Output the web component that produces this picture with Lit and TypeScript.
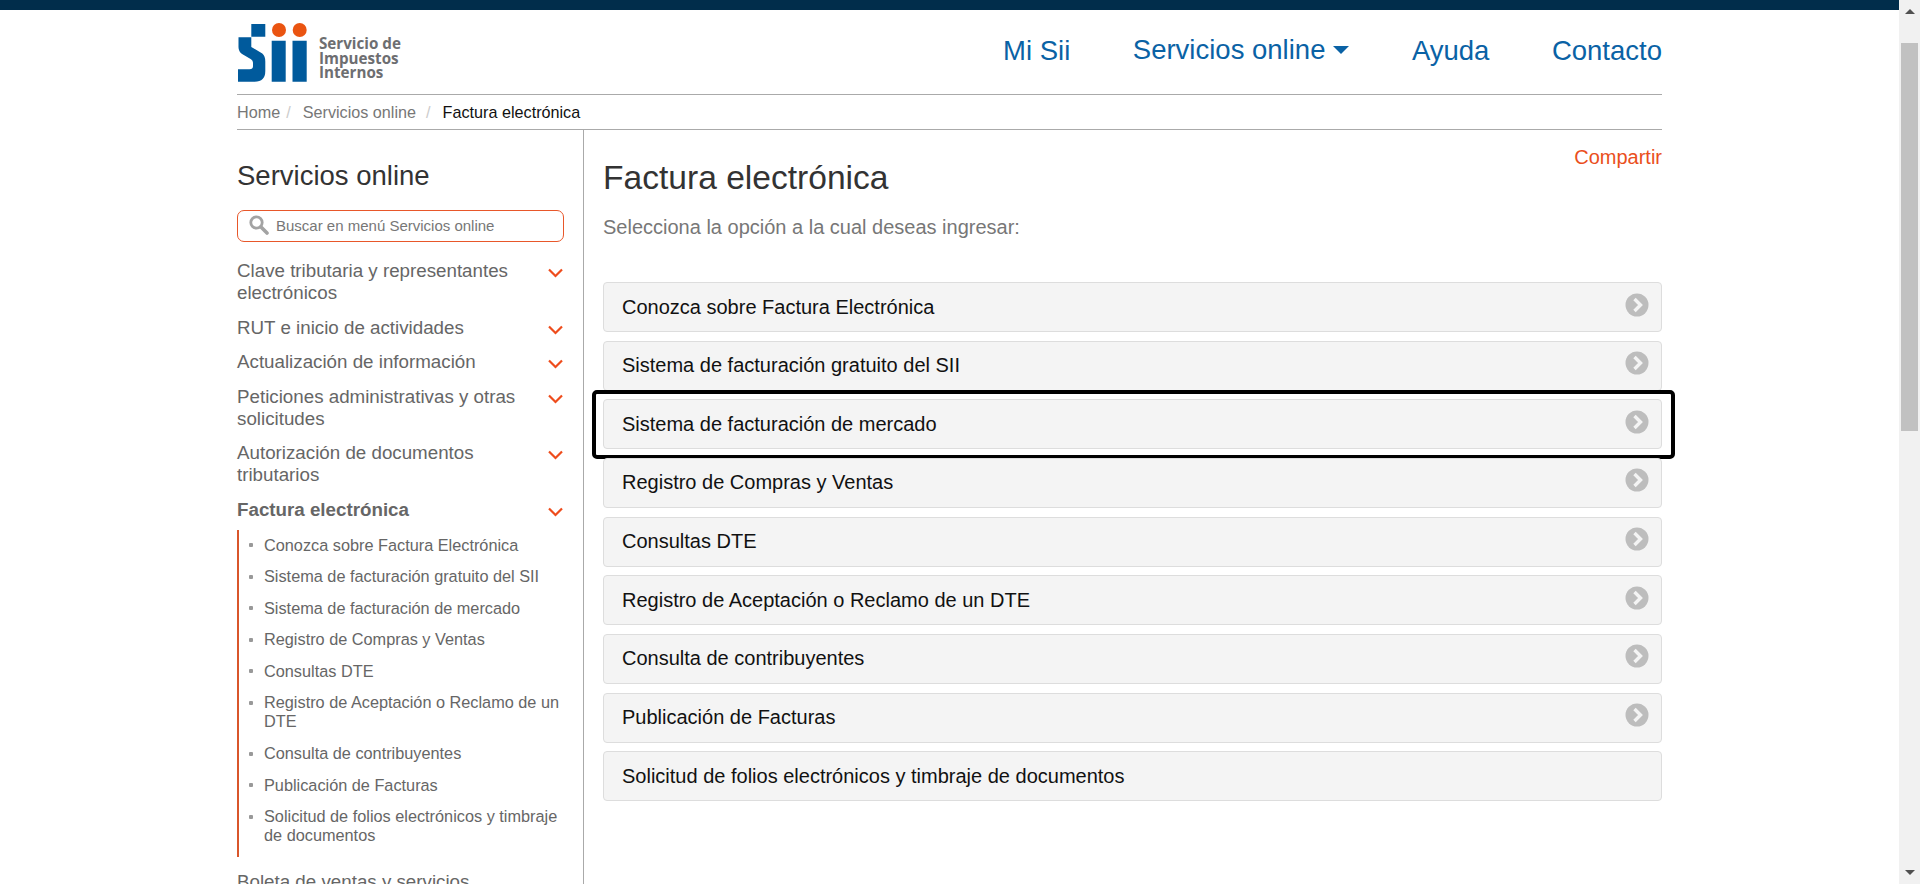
import { LitElement, html, css, svg } from "lit";
import { customElement } from "lit/decorators.js";

const groups: [string, boolean][] = [
  ["Clave tributaria y representantes electrónicos", false],
  ["RUT e inicio de actividades", false],
  ["Actualización de información", false],
  ["Peticiones administrativas y otras solicitudes", false],
  ["Autorización de documentos tributarios", false],
  ["Factura electrónica", true],
];
const subs = [
  "Conozca sobre Factura Electrónica",
  "Sistema de facturación gratuito del SII",
  "Sistema de facturación de mercado",
  "Registro de Compras y Ventas",
  "Consultas DTE",
  "Registro de Aceptación o Reclamo de un DTE",
  "Consulta de contribuyentes",
  "Publicación de Facturas",
  "Solicitud de folios electrónicos y timbraje de documentos",
];

const chevronDown = svg`<svg class="chev" width="15" height="10" viewBox="0 0 15 10"><path d="M1 1.5 L7.5 8 L14 1.5" fill="none" stroke="#ee4c1c" stroke-width="2.2"/></svg>`;
const arrowCircle = svg`<svg class="arrow" width="24" height="24" viewBox="0 0 24 24"><circle cx="12" cy="12" r="11.5" fill="#bdbdbd"/><path d="M9.5 6 L15.5 12 L9.5 18" fill="none" stroke="#f4f4f4" stroke-width="3.4"/></svg>`;

@customElement("app-root")
export class AppRoot extends LitElement {
  static styles = css`
    :host { display: flex; height: 884px; overflow: hidden; font-family: "Liberation Sans", Arial, sans-serif; background: #fff; color: #666; }
    .page { flex: 1; min-width: 0; display: flex; flex-direction: column; }
    .topbar { height: 10px; background: #012d4b; flex: none; }
    .wrap { margin: 0 237px; flex: 1; min-height: 0; display: flex; flex-direction: column; }
    header { height: 85px; flex: none; display: flex; justify-content: space-between; box-sizing: border-box; border-bottom: 1px solid #aaa; }
    .logo { display: flex; margin-top: 13px; height: 60px; }
    .logo-text { margin: 13px 0 0 12px; font: 700 15.2px/14.6px "Open Sans", sans-serif; color: #6d6e71; }
    nav { display: flex; gap: 62.5px; font-size: 27.5px; color: #0a62a5; padding-top: 25px; }
    .svc { display: inline-flex; align-items: center; gap: 8px; height: 31px; margin-top: -1px; }
    .caret { width: 0; height: 0; border-left: 8px solid transparent; border-right: 8px solid transparent; border-top: 8.5px solid #0a62a5; }
    .crumbs { height: 35px; flex: none; box-sizing: border-box; border-bottom: 1px solid #aaa; display: flex; align-items: center; font-size: 16.2px; color: #777; }
    .crumbs i { font-style: normal; color: #ccc; margin: 0 12px 0 6px; }
    .crumbs i.b { margin: 0 12px 0 10px; }
    .crumbs b { font-weight: 400; color: #111; }
    .body { flex: 1; min-height: 0; display: flex; }
    aside { width: 346px; flex: none; border-right: 1px solid #aaa; }
    aside h2 { margin: 30px 0 0; font-weight: 400; font-size: 27.5px; line-height: 32px; color: #333; }
    .search { margin-top: 18px; width: 327px; height: 32px; box-sizing: border-box; border: 1px solid #e8572a; border-radius: 7px; display: flex; align-items: center; gap: 7px; padding: 0 0 2px 11px; font-size: 15px; color: #777; }
    .groups { width: 328px; margin-top: 13px; }
    .group { display: flex; justify-content: space-between; font-size: 18.75px; line-height: 22px; padding: 5px 0 7.5px; }
    .group span { width: 295px; }
    .group.on { font-weight: 700; }
    .chev { margin: 8px 2px 0 0; flex: none; }
    ul { list-style: none; margin: 2px 0 0; padding: 0 0 4.6px 0; width: 328px; border-left: 2px solid #d9562b; box-sizing: border-box; }
    li { font-size: 16.3px; line-height: 19px; padding: 5.5px 0 7.1px 25px; position: relative; color: #666; }
    li::before { content: ""; position: absolute; left: 10px; top: 13px; width: 4px; height: 4px; border-radius: 1px; background: #999; }
    .next { font-size: 18.75px; line-height: 22px; margin-top: 14px; white-space: nowrap; }
    main { flex: 1; min-width: 0; padding-left: 19px; position: relative; }
    .share { position: absolute; right: 0; top: 16px; font-size: 20px; color: #ea4f1c; }
    h1 { margin: 28px 0 0; font-weight: 400; font-size: 33.6px; line-height: 40px; color: #333; }
    .lead { margin: 16.5px 0 0; font-size: 20px; line-height: 24px; color: #777; }
    .items { margin-top: 43.5px; display: flex; flex-direction: column; gap: 8.67px; }
    .item { height: 50px; box-sizing: border-box; background: #f4f4f4; border: 1px solid #ddd; border-radius: 4px; display: flex; align-items: center; justify-content: space-between; padding: 0 12px 0 18px; font-size: 20px; color: #111; position: relative; }
    .arrow { margin-top: -5px; }
    .focus { position: absolute; inset: -10px -14px -11px -12px; border: 4px solid #000; border-radius: 5px; pointer-events: none; }
    .scroll { width: 21px; flex: none; background: #f1f1f1; position: relative; }
    .thumb { position: absolute; left: 2px; right: 2px; top: 43px; height: 388px; background: #c1c1c1; }
    .up, .down { position: absolute; left: 6px; width: 0; height: 0; border-left: 5px solid transparent; border-right: 5px solid transparent; }
    .up { top: 9px; border-bottom: 5px solid #505050; }
    .down { bottom: 9px; border-top: 5px solid #505050; }
  `;

  render() {
    return html`
      <div class="page">
        <div class="topbar"></div>
        <div class="wrap">
          <header>
            <div class="logo">
              <svg width="70" height="60" viewBox="237 23 70 60">
                <path d="M251.3 24h14v12.7h-14z" fill="#005a9c"/>
                <path d="M238.5 37.3h12.8v9.7l11 6.5q3 2.5 3 8v9.5q0 10.7-10.7 10.7h-16.6v-12.4h11.5q3.5 0 3.5-3v-3.6q0-2.2-2-3.4l-8.5-5q-4-2.5-4-7z" fill="#005a9c"/>
                <path d="M271.7 40.7h14v41h-14zM292.5 40.7h14.2v41h-14.2z" fill="#005a9c"/>
                <circle cx="279" cy="30" r="7" fill="#ea5411"/>
                <circle cx="299.7" cy="30" r="7" fill="#ea5411"/>
              </svg>
              <div class="logo-text">Servicio de<br />Impuestos<br />Internos</div>
            </div>
            <nav>
              <span>Mi Sii</span>
              <span class="svc">Servicios online <span class="caret"></span></span>
              <span>Ayuda</span>
              <span>Contacto</span>
            </nav>
          </header>
          <div class="crumbs">Home<i>/</i>Servicios online<i class="b">/</i><b>Factura electrónica</b></div>
          <div class="body">
            <aside>
              <h2>Servicios online</h2>
              <div class="search">
                <svg width="20" height="20" viewBox="0 0 20 20"><circle cx="7.5" cy="7.5" r="5.7" fill="none" stroke="#a3a3a3" stroke-width="2.8"/><path d="M12 12 L18 18" stroke="#a3a3a3" stroke-width="3.6" stroke-linecap="round"/></svg>
                Buscar en menú Servicios online
              </div>
              <div class="groups">
                ${groups.map(([t, on]) => html`<div class="group ${on ? "on" : ""}"><span>${t}</span>${chevronDown}</div>`)}
                <ul>${subs.map((s) => html`<li>${s}</li>`)}</ul>
                <div class="next">Boleta de ventas y servicios</div>
              </div>
            </aside>
            <main>
              <div class="share">Compartir</div>
              <h1>Factura electrónica</h1>
              <p class="lead">Selecciona la opción a la cual deseas ingresar:</p>
              <div class="items">
                ${subs.map((s, i) => html`<div class="item"><span>${s}</span>${i < 8 ? arrowCircle : ""}${i === 2 ? html`<div class="focus"></div>` : ""}</div>`)}
              </div>
            </main>
          </div>
        </div>
      </div>
      <div class="scroll"><div class="up"></div><div class="thumb"></div><div class="down"></div></div>
    `;
  }
}
